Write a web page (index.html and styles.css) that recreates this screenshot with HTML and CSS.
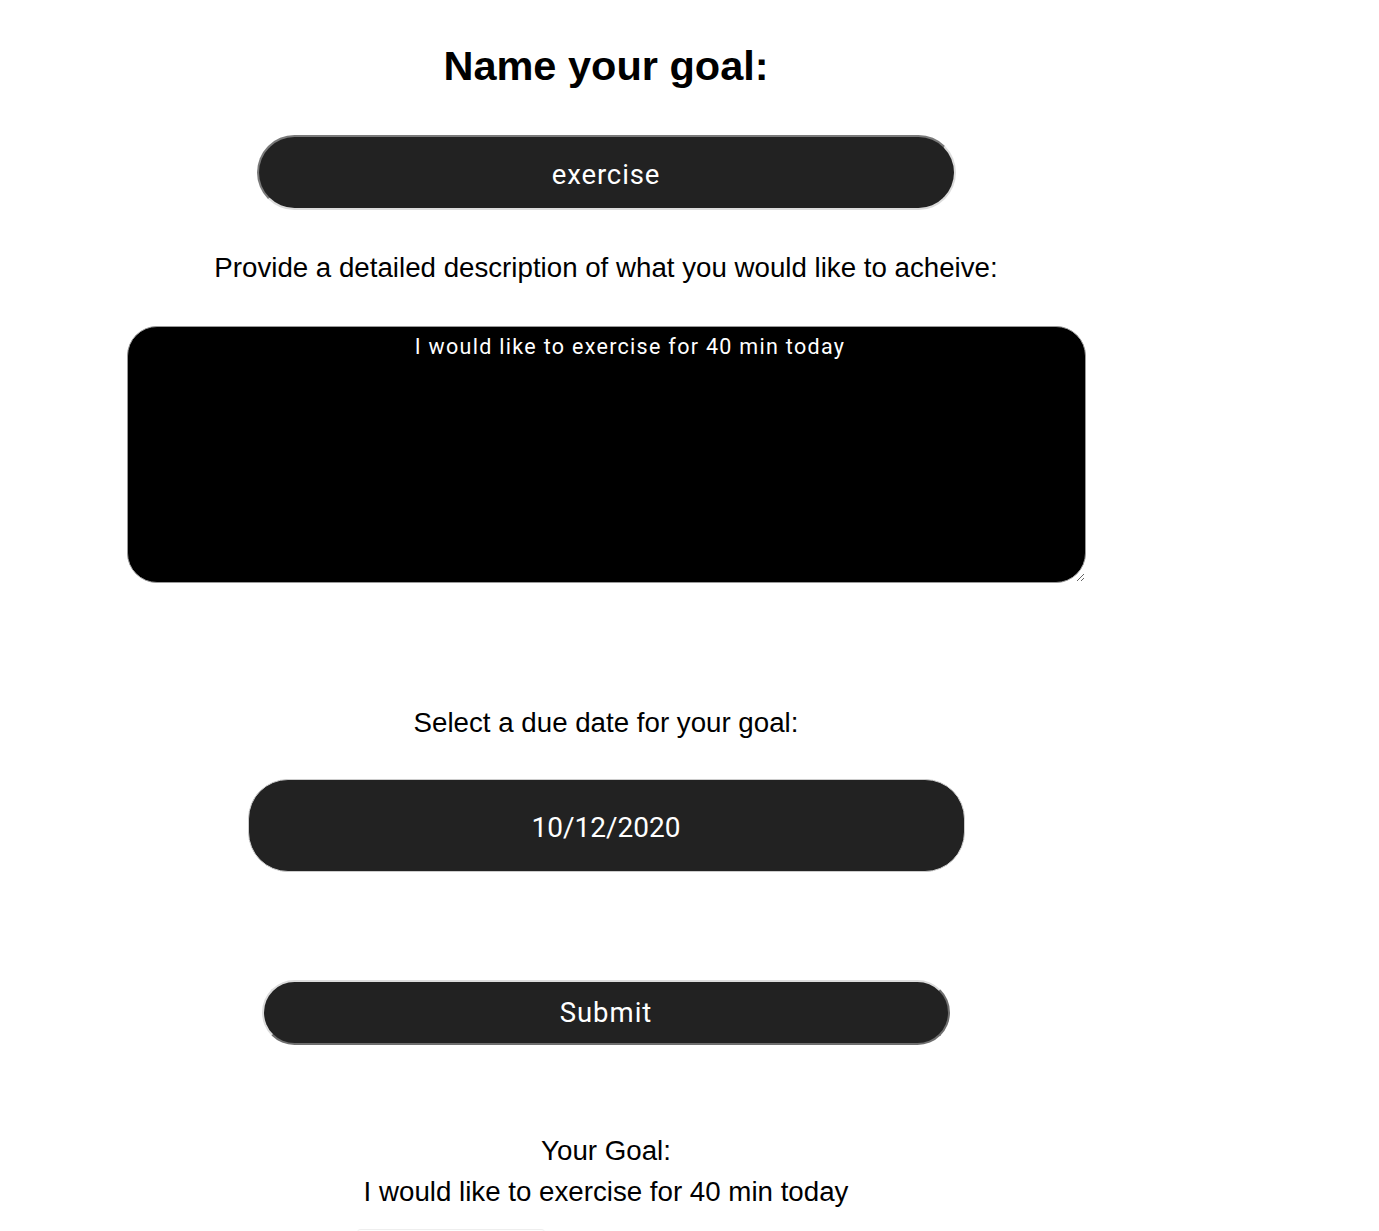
FILE: index.html
```html
<!DOCTYPE html>
<html>
<head>
<meta charset="utf-8">
<link rel="stylesheet" href="styles.css">
</head>
<body>
<main class="page">
  <h1 class="title">Name your goal:</h1>
  <input class="name-input" type="text" value="exercise">
  <p class="label desc-label">Provide a detailed description of what you would like to acheive:</p>
  <textarea class="desc">I would like to exercise for 40 min today</textarea>
  <p class="label date-label">Select a due date for your goal:</p>
  <div class="date-input">10/12/2020</div>
  <button class="submit" type="button">Submit</button>
  <div class="result">
    <div class="result-title">Your Goal:</div>
    <div class="result-text">I would like to exercise for 40 min today</div>
  </div>
  <div class="next-card"></div>
</main>
</body>
</html>
```
FILE: styles.css
```css
html, body {
  margin: 0;
  padding: 0;
  background: #ffffff;
  overflow: hidden;
}
body {
  margin: 8px;
  font-family: "Liberation Sans", Arial, sans-serif;
  color: #000;
}
.page {
  width: 1196px;
  display: flex;
  flex-direction: column;
  align-items: center;
}
.title {
  margin: 35px 0 0;
  font-size: 41.5px;
  font-weight: bold;
  line-height: 46px;
}
.name-input {
  margin-top: 46px;
  width: 699px;
  height: 75px;
  box-sizing: border-box;
  border-radius: 38px;
  background: #222222;
  border: 2px solid #7a7a7a;
  border-right-color: #dcdcdc;
  border-bottom-color: #dcdcdc;
  color: #fff;
  text-align: center;
  font-family: Roboto, "Noto Sans", sans-serif;
  font-size: 27.5px;
  letter-spacing: 0.9px;
  padding: 4px 0 0;
  outline: none;
}
.label {
  margin: 0;
  font-size: 27.7px;
  line-height: 32px;
}
.desc-label {
  margin-top: 42px;
}
.desc {
  margin-top: 42px;
  width: 959px;
  height: 257px;
  box-sizing: border-box;
  border-radius: 30px;
  background: #000;
  border: 1px solid #999;
  color: #fff;
  text-align: center;
  font-family: Roboto, "Noto Sans", sans-serif;
  font-size: 21.5px;
  letter-spacing: 1.3px;
  line-height: 26px;
  padding: 7px 0 0 48px;
  resize: both;
  outline: none;
}
.date-label {
  margin-top: 124px;
}
.date-input {
  margin-top: 40px;
  width: 717px;
  height: 93px;
  box-sizing: border-box;
  border-radius: 40px;
  background: #222222;
  border: 1px solid #ccc;
  color: #fff;
  font-family: Roboto, "Noto Sans", sans-serif;
  font-size: 28px;
  padding-top: 3px;
  display: flex;
  align-items: center;
  justify-content: center;
}
.submit {
  margin-top: 108px;
  width: 688px;
  height: 65px;
  box-sizing: border-box;
  border-radius: 33px;
  background: #222222;
  border: 2px solid #dcdcdc;
  border-right-color: #6e6e6e;
  border-bottom-color: #6e6e6e;
  color: #fff;
  font-family: Roboto, "Noto Sans", sans-serif;
  font-size: 27.5px;
  letter-spacing: 1px;
  padding: 0;
}
.result {
  margin-top: 85px;
  text-align: center;
  font-size: 27.7px;
  line-height: 41px;
}
.next-card {
  margin-top: 17px;
  margin-right: 310px;
  width: 188px;
  height: 20px;
  border-top: 1px solid #eee;
  border-radius: 4px;
}
```
